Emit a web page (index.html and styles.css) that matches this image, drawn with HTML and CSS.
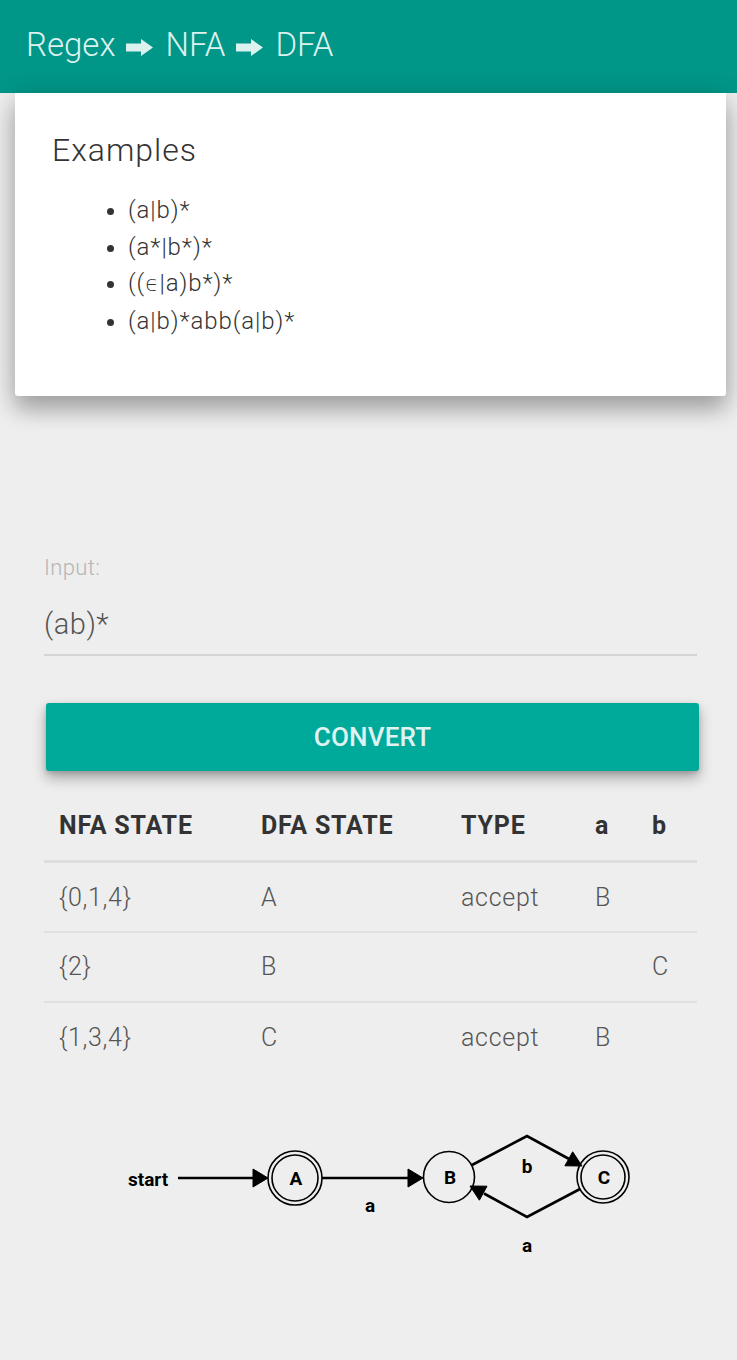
FILE: index.html
```html
<!DOCTYPE html>
<html>
<head>
<meta charset="utf-8">
<title>Regex to DFA</title>
<link rel="stylesheet" href="styles.css">
</head>
<body>
<header class="topbar">
  <h1 class="title">Regex<svg class="arrow" width="27" height="17" viewBox="0 0 27 17"><path d="M0 4.5H15V0L27 8.5L15 17V12.5H0Z"/></svg>NFA<svg class="arrow" width="27" height="17" viewBox="0 0 27 17"><path d="M0 4.5H15V0L27 8.5L15 17V12.5H0Z"/></svg>DFA</h1>
</header>

<section class="card">
  <h2 class="card-title">Examples</h2>
  <ul class="examples">
    <li>(a|b)*</li>
    <li>(a*|b*)*</li>
    <li>((<span class="eps">ϵ</span>|a)b*)*</li>
    <li>(a|b)*abb(a|b)*</li>
  </ul>
</section>

<main class="content">
  <label class="input-label" for="regex">Input:</label>
  <input class="input" id="regex" type="text" value="(ab)*">
  <button class="btn">CONVERT</button>

  <table class="table">
    <thead>
      <tr><th class="c1">NFA STATE</th><th class="c2">DFA STATE</th><th class="c3">TYPE</th><th class="c4">a</th><th class="c5">b</th></tr>
    </thead>
    <tbody>
      <tr><td>{0,1,4}</td><td>A</td><td>accept</td><td>B</td><td></td></tr>
      <tr><td>{2}</td><td>B</td><td></td><td></td><td>C</td></tr>
      <tr><td>{1,3,4}</td><td>C</td><td>accept</td><td>B</td><td></td></tr>
    </tbody>
  </table>
</main>

<svg class="graph" width="737" height="220" viewBox="0 1090 737 220">
  <text class="lbl" x="128" y="1187">start</text>
  <line class="edge" x1="178" y1="1179" x2="255" y2="1179"/>
  <polygon class="head" points="253,1170 268,1179 253,1188"/>
  <circle class="node" cx="295" cy="1179" r="27"/>
  <circle class="node" cx="295" cy="1179" r="23"/>
  <text class="lbl mid" x="296" y="1186">A</text>

  <line class="edge" x1="322" y1="1179" x2="410" y2="1179"/>
  <polygon class="head" points="408,1170 423,1179 408,1188"/>
  <text class="lbl mid" x="370" y="1213">a</text>

  <circle class="node" cx="449" cy="1178" r="25.5"/>
  <text class="lbl mid" x="450" y="1185">B</text>

  <polyline class="edge" points="472,1166 527,1137 570,1160.5"/>
  <polygon class="head" points="582,1167 572.7,1152.8 564.9,1166.8"/>
  <text class="lbl mid" x="527" y="1174">b</text>

  <circle class="node" cx="603" cy="1178" r="26"/>
  <circle class="node" cx="603" cy="1178" r="22"/>
  <text class="lbl mid" x="604" y="1185">C</text>

  <polyline class="edge" points="580,1190 527,1218 484,1194.5"/>
  <polygon class="head" points="470,1187 487,1187.2 479.4,1201.2"/>
  <text class="lbl mid" x="527" y="1253">a</text>
</svg>
</body>
</html>
```

FILE: styles.css
```css
* { box-sizing: border-box; }

html, body {
  margin: 0;
  padding: 0;
  background: #eeeeee;
  font-family: Roboto, "Liberation Sans", sans-serif;
}

.topbar {
  height: 93px;
  background: #009688;
  padding: 0 0 4px 26px;
}

.title {
  margin: 0;
  font-size: 33px;
  font-weight: 300;
  line-height: 89px;
  color: #dcf2ef;
  white-space: nowrap;
}

.arrow {
  display: inline-block;
  vertical-align: baseline;
  margin: 0 12px 0 11px;
  fill: #dcf2ef;
}

.card {
  margin: 0 11px 0 15px;
  background: #ffffff;
  border-radius: 0 0 3px 3px;
  padding: 39px 37px 56px 37px;
  box-shadow: 0 14px 22px rgba(0, 0, 0, 0.26), 0 4px 30px rgba(0, 0, 0, 0.14);
  position: relative;
}

.card-title {
  margin: 0 0 24px 0;
  font-size: 32px;
  line-height: 36px;
  font-weight: 300;
  letter-spacing: 1px;
  color: #333333;
}

.examples {
  margin: 0;
  padding-left: 76px;
  font-size: 24px;
  line-height: 36.7px;
  font-weight: 300;
  letter-spacing: 0.9px;
  color: #333333;
}

.eps {
  font-family: "DejaVu Sans", sans-serif;
  font-weight: 200;
  font-size: 22px;
}

.content {
  padding: 159px 40px 0 44px;
}

.input-label {
  display: block;
  font-size: 22px;
  line-height: 26px;
  font-weight: 300;
  letter-spacing: 0.4px;
  color: #b5b5b5;
}

.input {
  display: block;
  width: 100%;
  height: 52px;
  margin: 23px 0 0 0;
  padding: 0 0 10px 0;
  border: none;
  border-bottom: 2px solid #d4d4d4;
  background: transparent;
  font-family: Roboto, "Liberation Sans", sans-serif;
  font-size: 29px;
  font-weight: 300;
  letter-spacing: 0.5px;
  color: #555555;
  outline: none;
}

.btn {
  display: block;
  width: 653px;
  height: 68px;
  margin: 47px 0 0 2px;
  border: none;
  border-radius: 3px;
  background: #00aa9a;
  color: #e0f2f1;
  font-family: Roboto, "Liberation Sans", sans-serif;
  font-size: 26px;
  font-weight: 500;
  letter-spacing: 0.2px;
  box-shadow: 0 7px 14px rgba(0, 0, 0, 0.3), 0 2px 5px rgba(0, 0, 0, 0.15);
}

.table {
  width: 100%;
  margin-top: 19px;
  border-collapse: collapse;
}

.table th {
  height: 72px;
  padding: 0 0 0 15px;
  text-align: left;
  font-size: 25px;
  font-weight: 700;
  letter-spacing: 0.8px;
  color: #333333;
  border-bottom: 3px solid #dddddd;
}

.table td {
  height: 70px;
  padding: 0 0 0 15px;
  text-align: left;
  font-size: 25px;
  font-weight: 300;
  letter-spacing: 0.7px;
  color: #555555;
  border-bottom: 2px solid #e0e0e0;
}

.table tbody tr:last-child td { border-bottom: none; }

.c1 { width: 202px; }
.c2 { width: 200px; }
.c3 { width: 134px; }
.c4 { width: 57px; }

.graph {
  display: block;
  margin-top: 17px;
}

.edge {
  fill: none;
  stroke: #000;
  stroke-width: 2.6;
}

.head {
  fill: #000;
  stroke: #000;
  stroke-width: 1;
}

.node {
  fill: none;
  stroke: #000;
  stroke-width: 1.6;
}

.lbl {
  font-family: Roboto, "Liberation Sans", sans-serif;
  font-size: 19px;
  font-weight: 700;
  fill: #000;
}

.mid { text-anchor: middle; }
```
